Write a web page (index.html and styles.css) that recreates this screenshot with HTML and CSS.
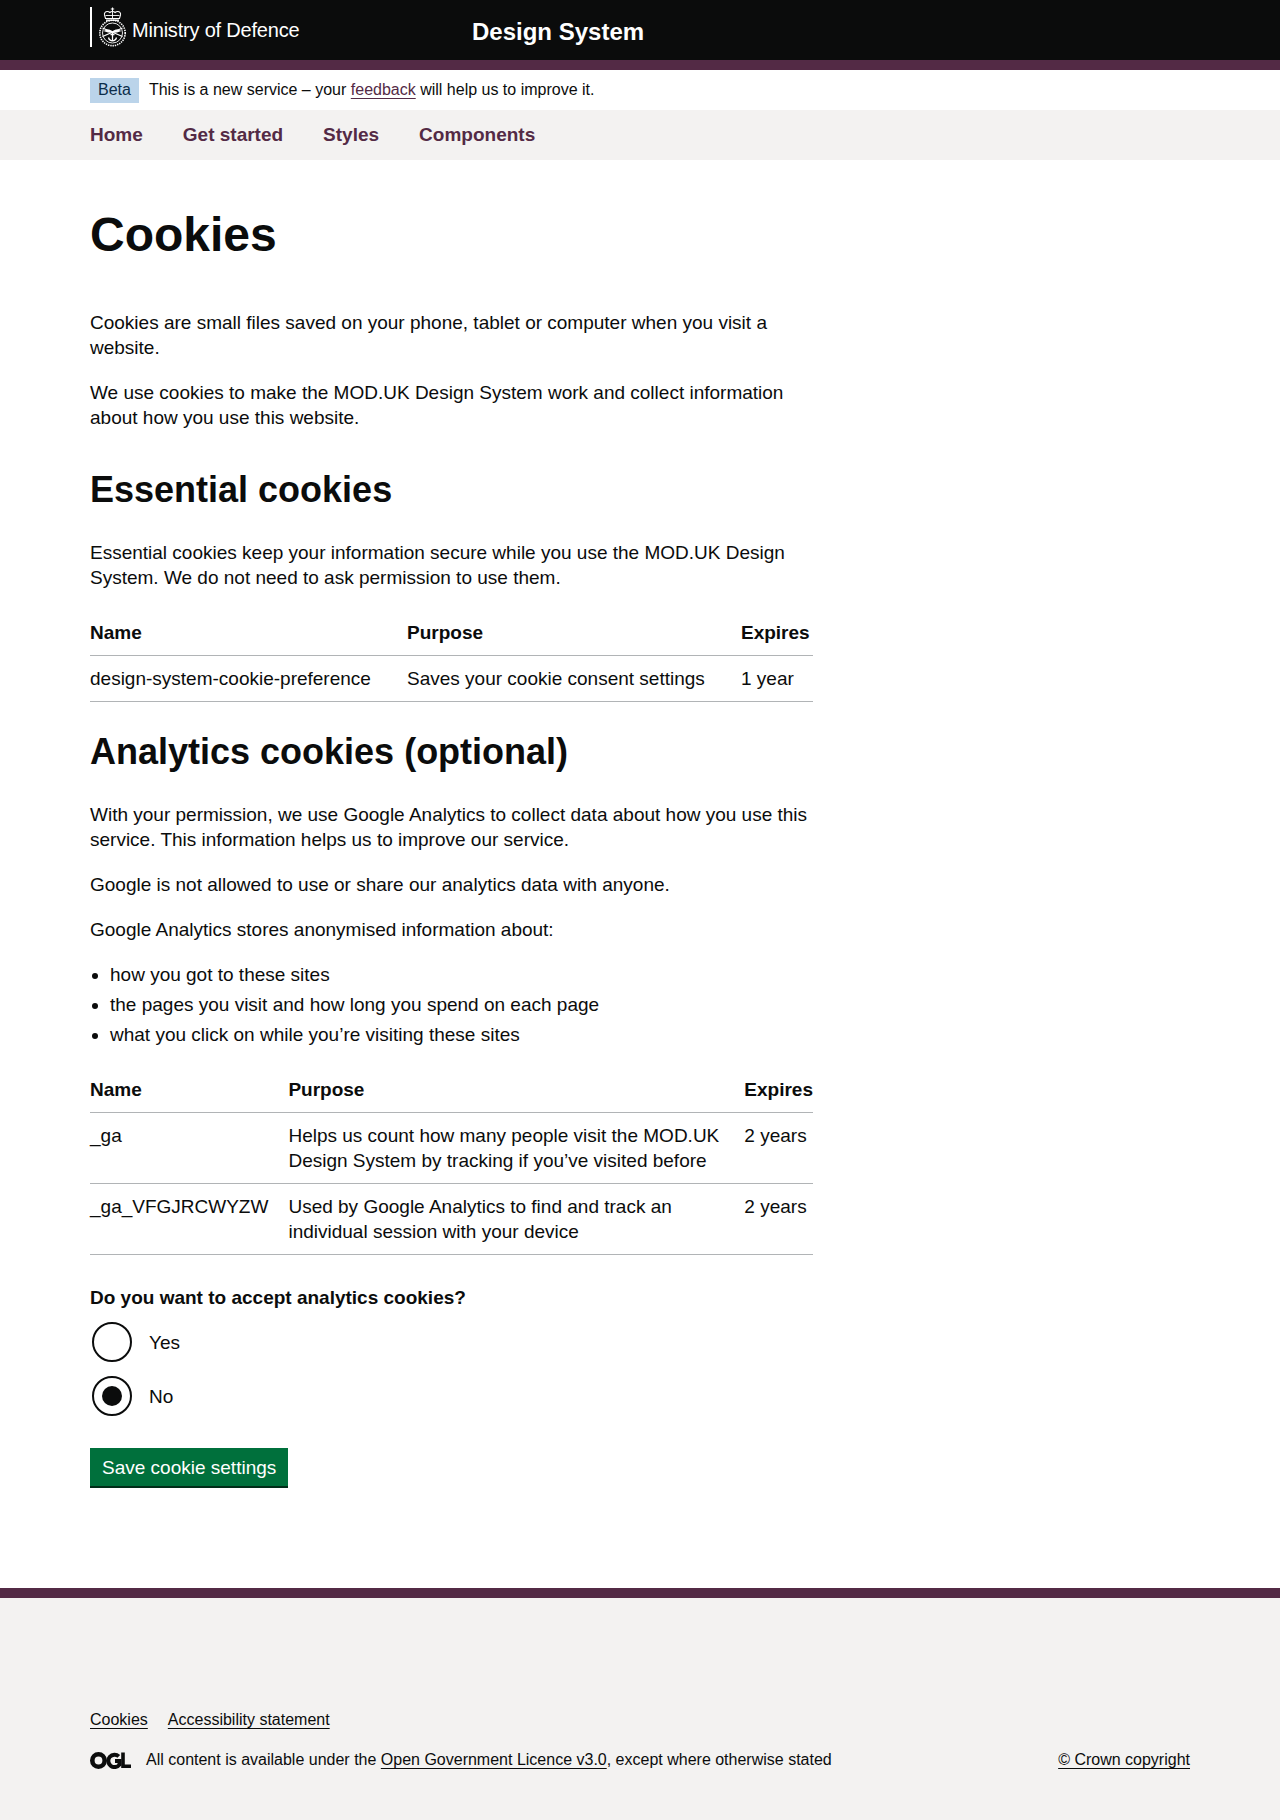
FILE: index.html
```html
<!DOCTYPE html>
<html lang="en">

<head>
  <title>Cookies - MOD.UK Design System</title>
  <link rel="stylesheet" href="styles.css">
</head>

<body>
  <header class="header">
    <div class="wrap header-inner">
      <a class="logo" href="#">
        <svg class="crest" width="29" height="40" viewBox="0 0 29 40" fill="none" stroke="#fff">
          <!-- crown -->
          <path d="M14.500 .5v4M12.800 2h3.400" stroke-width="1.100"/>
          <path d="M14.500 4.500c-1.200 0-2 .4-2.600 1-.7-.6-1.500-1-2.600-1-2 0-3.200 1.500-2.800 3.400l1 3.600h14l1-3.600c.4-1.900-.8-3.400-2.800-3.400-1.100 0-1.900.4-2.600 1-.6-.6-1.400-1-2.600-1z" stroke-width="1.100"/>
          <path d="M14.500 5v6M7.500 8.500h14" stroke-width=".9"/>
          <path d="M8 13.200h13" stroke-width="1.400"/>
          <!-- badge -->
          <circle cx="14.500" cy="26" r="12.700" stroke-width="1.600" stroke-dasharray="1.400 .9"/>
          <circle cx="14.500" cy="26" r="10" stroke-width=".9"/>
          <!-- swords and wings -->
          <path d="M4.500 21l20 8.500M24.500 21l-20 8.500" stroke-width="1.300"/>
          <path d="M5.500 24c3.500-2.200 6-2.200 9 .3 3-2.500 5.500-2.500 9-.3-3 1.200-6 2-9 2s-6-.8-9-2z" fill="#fff" stroke="none"/>
          <!-- anchor -->
          <path d="M14.500 25v9M10.500 30.500c.5 2 2 3.300 4 3.300s3.500-1.300 4-3.300M12.500 27.500h4" stroke-width="1.300"/>
        </svg>
        <span class="logo-text">Ministry of Defence</span>
      </a>
      <a class="service-name" href="#">Design System</a>
    </div>
  </header>

  <div class="wrap phase">
    <strong class="tag">Beta</strong>
    <span>This is a new service – your <a class="link-purple" href="#">feedback</a> will help us to improve it.</span>
  </div>

  <nav class="nav">
    <ul class="wrap nav-list">
      <li><a href="#">Home</a></li>
      <li><a href="#">Get started</a></li>
      <li><a href="#">Styles</a></li>
      <li><a href="#">Components</a></li>
    </ul>
  </nav>

  <main class="wrap">
    <div class="content">
      <h1>Cookies</h1>

      <p>Cookies are small files saved on your phone, tablet or computer when you visit a website.</p>
      <p>We use cookies to make the MOD.UK Design System work and collect information about how you use this website.</p>

      <h2>Essential cookies</h2>
      <p>Essential cookies keep your information secure while you use the MOD.UK Design System. We do not need to ask permission to use them.</p>

      <table class="table">
        <thead>
          <tr>
            <th class="col-a1">Name</th>
            <th class="col-a2">Purpose</th>
            <th>Expires</th>
          </tr>
        </thead>
        <tbody>
          <tr>
            <td>design-system-cookie-preference</td>
            <td>Saves your cookie consent settings</td>
            <td>1 year</td>
          </tr>
        </tbody>
      </table>

      <h2>Analytics cookies (optional)</h2>
      <p>With your permission, we use Google Analytics to collect data about how you use this service. This information helps us to improve our service.</p>
      <p>Google is not allowed to use or share our analytics data with anyone.</p>
      <p>Google Analytics stores anonymised information about:</p>
      <ul class="list">
        <li>how you got to these sites</li>
        <li>the pages you visit and how long you spend on each page</li>
        <li>what you click on while you’re visiting these sites</li>
      </ul>

      <table class="table">
        <thead>
          <tr>
            <th class="col-b1">Name</th>
            <th class="col-b2">Purpose</th>
            <th>Expires</th>
          </tr>
        </thead>
        <tbody>
          <tr>
            <td>_ga</td>
            <td>Helps us count how many people visit the MOD.UK Design System by tracking if you’ve visited before</td>
            <td>2 years</td>
          </tr>
          <tr>
            <td>_ga_VFGJRCWYZW</td>
            <td>Used by Google Analytics to find and track an individual session with your device</td>
            <td>2 years</td>
          </tr>
        </tbody>
      </table>

      <form>
        <div class="legend">Do you want to accept analytics cookies?</div>
        <label class="radio">
          <input type="radio" name="analytics" value="yes">
          <span class="radio-mark"></span>
          <span>Yes</span>
        </label>
        <label class="radio">
          <input type="radio" name="analytics" value="no" checked>
          <span class="radio-mark"></span>
          <span>No</span>
        </label>
        <button class="button" type="button">Save cookie settings</button>
      </form>
    </div>
  </main>

  <footer class="footer">
    <div class="wrap">
      <ul class="footer-links">
        <li><a href="#">Cookies</a></li>
        <li><a href="#">Accessibility statement</a></li>
      </ul>
      <div class="footer-row">
        <div class="licence">
          <svg class="ogl" width="41" height="17" viewBox="0 0 41 17" fill="none" stroke="#0b0c0c">
            <circle cx="8.500" cy="8.500" r="6.200" stroke-width="4.600"/>
            <path d="M28.800 4.400a6.200 6.200 0 1 0 .7 8.200v-3.600h-4.500" stroke-width="4"/>
            <path d="M33 .5v13.800h8" stroke-width="3.600"/>
          </svg>
          <span>All content is available under the <a href="#">Open Government Licence v3.0</a>, except where otherwise stated</span>
        </div>
        <a href="#">© Crown copyright</a>
      </div>
    </div>
  </footer>
</body>

</html>
```

FILE: styles.css
```css
* {
  box-sizing: border-box;
}

body {
  margin: 0;
  font-family: "Liberation Sans", Arial, sans-serif;
  font-size: 19px;
  line-height: 25px;
  color: #0b0c0c;
  background: #fff;
}

a {
  color: inherit;
}

.wrap {
  width: 1100px;
  margin: 0 auto;
}

/* header */
.header {
  height: 70px;
  background: #0b0c0c;
  border-bottom: 10px solid #532a45;
}

.header-inner {
  display: flex;
  height: 60px;
}

.logo {
  display: flex;
  align-items: flex-start;
  width: 382px;
  height: 40px;
  margin-top: 7px;
  padding-left: 6px;
  border-left: 2px solid #fff;
  color: #fff;
  text-decoration: none;
}

.crest {
  flex: none;
}

.logo-text {
  margin: 11px 0 0 5px;
  font-size: 20px;
  letter-spacing: -0.2px;
}

.service-name {
  margin-top: 17px;
  font-size: 24px;
  line-height: 30px;
  font-weight: 700;
  color: #fff;
  text-decoration: none;
}

/* beta bar */
.phase {
  display: flex;
  align-items: flex-start;
  height: 40px;
  padding-top: 7px;
  font-size: 16px;
  line-height: 25px;
}

.tag {
  margin: 1px 10px 0 0;
  padding: 0 8px 2px;
  background: #bbd4ea;
  color: #0c2d4a;
  font-weight: 400;
  line-height: 23px;
}

.link-purple {
  color: #532a45;
  text-underline-offset: 3px;
}

/* nav */
.nav {
  height: 50px;
  background: #f3f2f1;
}

.nav-list {
  display: flex;
  gap: 40px;
  margin: 0 auto;
  padding: 12px 0 0;
  list-style: none;
}

.nav-list a {
  color: #532a45;
  font-weight: 700;
  text-decoration: none;
}

/* content */
.content {
  width: 723px;
  padding-top: 50px;
  padding-bottom: 100px;
}

h1 {
  margin: 0 0 50px;
  font-size: 48px;
  line-height: 50px;
}

h2 {
  margin: 0 0 30px;
  font-size: 36px;
  line-height: 40px;
}

p {
  margin: 0 0 20px;
}

p + h2 {
  margin-top: 40px;
}

.list {
  margin: 0 0 20px;
  padding-left: 20px;
}

.list li {
  margin-bottom: 5px;
}

.table {
  width: 100%;
  margin-bottom: 30px;
  border-collapse: collapse;
  border-spacing: 0;
}

.table th,
.table td {
  padding: 10px 20px 10px 0;
  border-bottom: 1px solid #b1b4b6;
  text-align: left;
  vertical-align: top;
}

.table th:last-child,
.table td:last-child {
  padding-right: 0;
}

.col-a1 {
  width: 317px;
}

.col-a2 {
  width: 334px;
}

.col-b1 {
  width: 198px;
}

.col-b2 {
  width: 457px;
}

.legend {
  margin-bottom: 10px;
  font-weight: 700;
}

/* radios */
.radio {
  display: flex;
  align-items: center;
  height: 44px;
  margin-bottom: 10px;
}

.radio input {
  position: absolute;
  opacity: 0;
}

.radio-mark {
  display: flex;
  align-items: center;
  justify-content: center;
  width: 40px;
  height: 40px;
  margin: 0 17px 0 2px;
  border: 2px solid #0b0c0c;
  border-radius: 50%;
}

.radio input:checked + .radio-mark::after {
  content: "";
  width: 20px;
  height: 20px;
  border-radius: 50%;
  background: #0b0c0c;
}

.button {
  display: block;
  margin-top: 30px;
  padding: 7px 12px 6px;
  border: 0;
  border-bottom: 2px solid #002d18;
  background: #00703c;
  color: #fff;
  font: inherit;
}

/* footer */
.footer {
  height: 232px;
  padding-top: 112px;
  background: #f3f2f1;
  border-top: 10px solid #532a45;
  font-size: 16px;
  line-height: 20px;
}

.footer a {
  text-underline-offset: 3px;
}

.footer-links {
  display: flex;
  gap: 20px;
  margin: 0 0 20px;
  padding: 0;
  list-style: none;
}

.footer-row {
  display: flex;
  justify-content: space-between;
  align-items: center;
}

.licence {
  display: flex;
  align-items: center;
  gap: 15px;
}

.ogl {
  flex: none;
}
```
